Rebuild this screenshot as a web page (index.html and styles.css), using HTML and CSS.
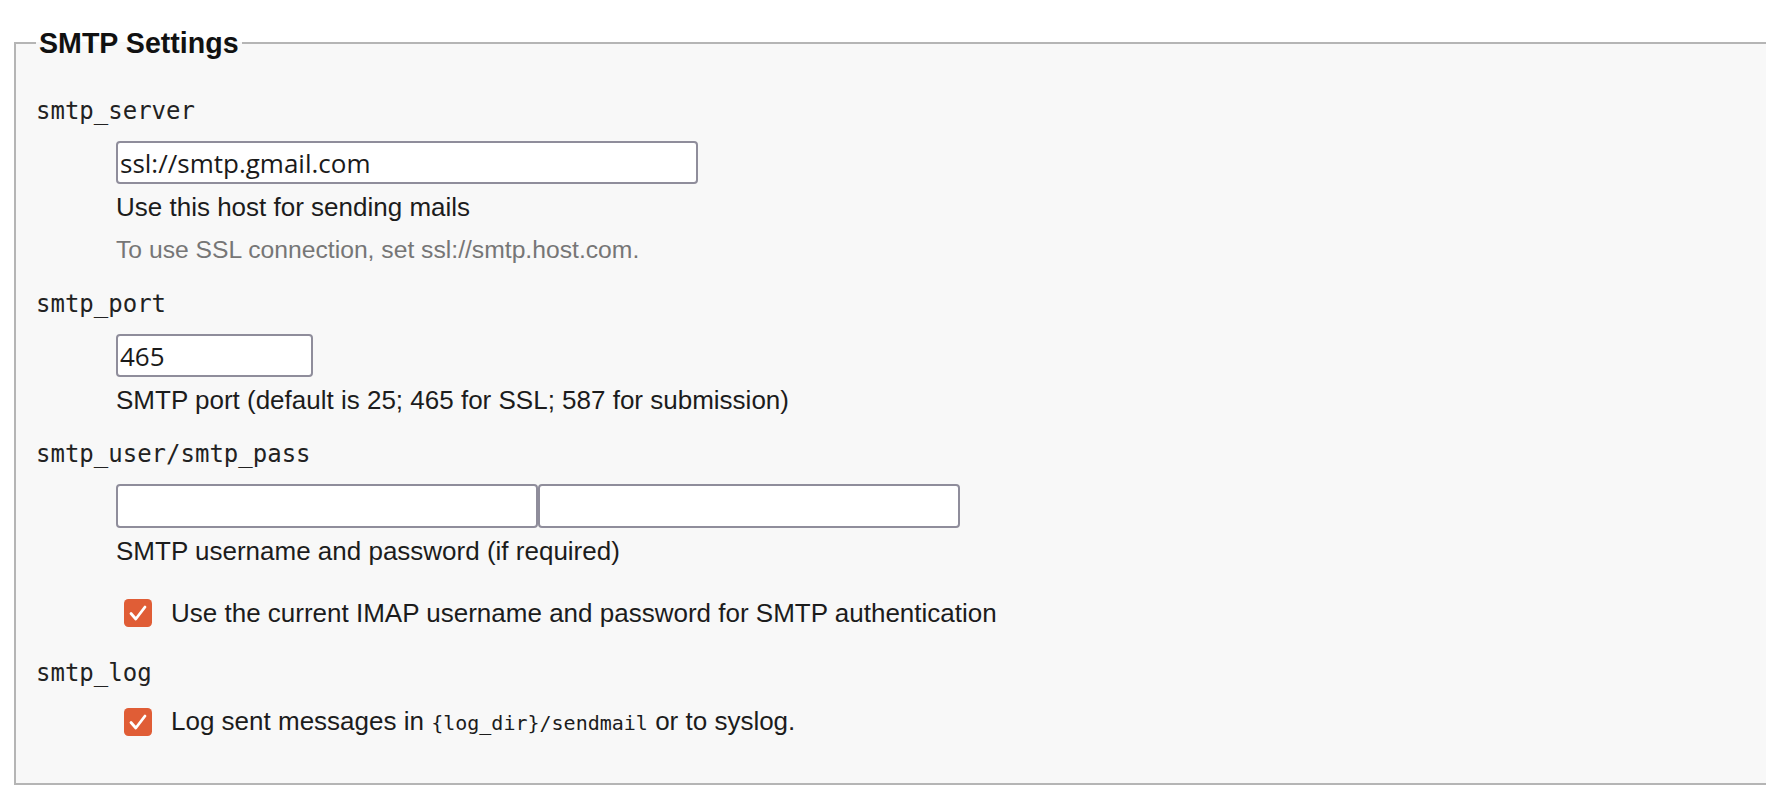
FILE: index.html
```html
<!DOCTYPE html>
<html lang="en">
<head>
<meta charset="utf-8">
<title>SMTP Settings</title>
<link rel="stylesheet" href="styles.css">
</head>
<body>
<fieldset class="settings">
  <legend class="settings-title">SMTP Settings</legend>
  <dl class="props">
    <dt class="propname first">smtp_server</dt>
    <dd class="propval">
      <input class="text-input w-server" type="text" value="ssl://smtp.gmail.com">
      <div class="desc">Use this host for sending mails</div>
      <p class="hint">To use SSL connection, set ssl://smtp.host.com.</p>
    </dd>

    <dt class="propname">smtp_port</dt>
    <dd class="propval">
      <input class="text-input w-port" type="text" value="465">
      <div class="desc">SMTP port (default is 25; 465 for SSL; 587 for submission)</div>
    </dd>

    <dt class="propname">smtp_user/smtp_pass</dt>
    <dd class="propval">
      <div class="pair"><input class="text-input w-user" type="text" value=""><input class="text-input w-user" type="password" value=""></div>
      <div class="desc">SMTP username and password (if required)</div>
      <label class="check-row spaced">
        <span class="check" aria-hidden="true"><svg viewBox="0 0 28 28" width="28" height="28"><rect x="0" y="0" width="28" height="28" rx="4.5" fill="#e05d36"/><path d="M7 14.5 L11.8 20 L21 8" fill="none" stroke="#fff" stroke-width="2.8" stroke-linecap="round" stroke-linejoin="round"/></svg></span>
        <span class="check-label">Use the current IMAP username and password for SMTP authentication</span>
      </label>
    </dd>

    <dt class="propname after-check">smtp_log</dt>
    <dd class="propval">
      <label class="check-row">
        <span class="check" aria-hidden="true"><svg viewBox="0 0 28 28" width="28" height="28"><rect x="0" y="0" width="28" height="28" rx="4.5" fill="#e05d36"/><path d="M7 14.5 L11.8 20 L21 8" fill="none" stroke="#fff" stroke-width="2.8" stroke-linecap="round" stroke-linejoin="round"/></svg></span>
        <span class="check-label">Log sent messages in <code class="code">{log_dir}/sendmail</code> or to syslog.</span>
      </label>
    </dd>
  </dl>
</fieldset>
</body>
</html>
```

FILE: styles.css
```css
html, body {
  margin: 0;
  padding: 0;
  overflow: hidden;
  background: #ffffff;
}

body {
  font-family: "Liberation Sans", Arial, sans-serif;
  font-size: 26px;
  color: #1c1c1c;
}

.settings {
  margin: 27px -60px 0 14px;
  padding: 37px 0 42px 20px;
  border: 2px solid #b5b5b5;
  background: #f8f8f8;
  min-width: 0;
}

.settings-title {
  padding: 0 3px;
  margin: 0;
  font-size: 28.6px;
  line-height: 32px;
  font-weight: bold;
  color: #111;
}

.props {
  margin: 0;
  padding: 0;
}

.propname {
  margin: 24px 0 15px 0;
  font-family: "DejaVu Sans Mono", monospace;
  font-size: 24px;
  line-height: 30px;
  color: #222;
}

.propname.first {
  margin-top: 0;
}

.propname.after-check {
  margin-top: 26px;
}

.propval {
  margin: 0 0 0 80px;
  padding: 0;
}

.text-input {
  display: block;
  box-sizing: border-box;
  height: 43px;
  margin: 0;
  padding: 0 2px;
  border: 2px solid #8f8d9b;
  border-radius: 4px;
  background: #fff;
  font-family: "Open Sans", "Noto Sans", sans-serif;
  font-size: 26px;
  color: #1a1a1a;
  outline: none;
}

.w-server { width: 582px; }
.w-port { width: 197px; }
.w-user { width: 422px; }

.pair {
  display: flex;
  gap: 0;
}

.pair .text-input {
  height: 44px;
}

.desc {
  margin-top: 8px;
  line-height: 30px;
}

.hint {
  margin: 13px 0 0 0;
  font-size: 24.7px;
  line-height: 30px;
  color: #767676;
}

.check-row {
  display: flex;
  align-items: center;
  height: 38px;
}

.check-row.spaced {
  margin-top: 28px;
}

.check {
  display: block;
  width: 28px;
  height: 28px;
  margin: 0 19px 0 8px;
}

.check svg {
  display: block;
}

.check-label {
  line-height: 30px;
}

.code {
  font-family: "DejaVu Sans Mono", monospace;
  font-size: 20px;
}
```
